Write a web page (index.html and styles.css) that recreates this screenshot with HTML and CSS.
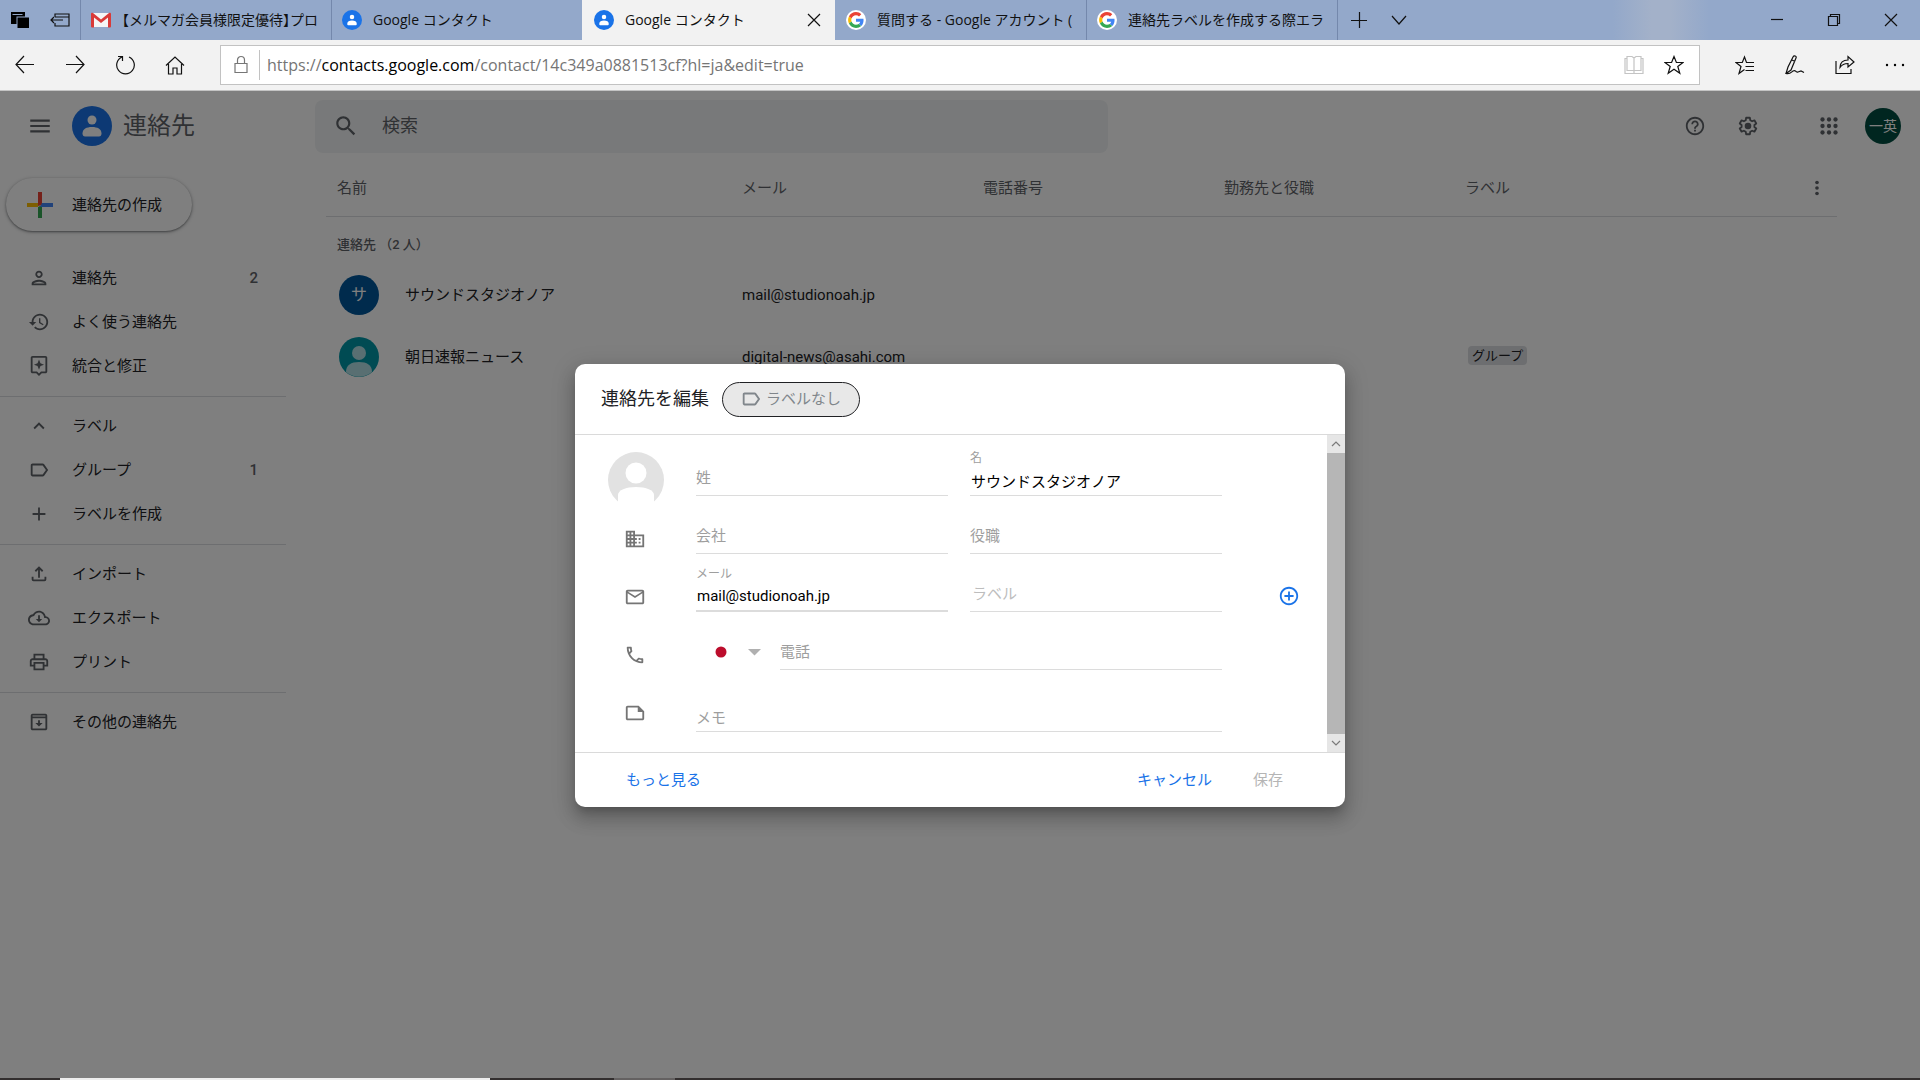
FILE: index.html
```html
<!DOCTYPE html>
<html lang="ja">
<head>
<meta charset="utf-8">
<title>Google コンタクト</title>
<link rel="stylesheet" href="styles.css">
</head>
<body>
<svg class="symbols" aria-hidden="true">
  <symbol id="contact-logo" viewBox="0 0 40 40"><circle cx="20" cy="20" r="20" fill="#1a73e8"/><circle cx="20" cy="14" r="4.500" fill="#fff"/><path d="M10.500 27.500c0-4.500 4-6.500 9.500-6.500s9.500 2 9.500 6.500c0 2-1 3-2.500 3H13c-1.500 0-2.500-1-2.500-3z" fill="#fff"/></symbol>
  <symbol id="google-logo" viewBox="0 0 48 48"><circle cx="24" cy="24" r="24" fill="#fff"/><g transform="translate(5 5) scale(.79)"><path fill="#EA4335" d="M24 9.500c3.540 0 6.710 1.220 9.210 3.600l6.850-6.850C35.900 2.380 30.470 0 24 0 14.620 0 6.510 5.380 2.560 13.220l7.980 6.190C12.430 13.720 17.740 9.500 24 9.500z"/><path fill="#4285F4" d="M46.980 24.550c0-1.570-.15-3.090-.38-4.550H24v9.020h12.940c-.58 2.960-2.260 5.480-4.780 7.180l7.730 6c4.510-4.180 7.090-10.360 7.090-17.650z"/><path fill="#FBBC05" d="M10.530 28.590c-.48-1.450-.76-2.990-.76-4.590s.27-3.140.76-4.590l-7.980-6.190C.92 16.460 0 20.120 0 24c0 3.880.92 7.540 2.560 10.780l7.970-6.190z"/><path fill="#34A853" d="M24 48c6.480 0 11.930-2.130 15.890-5.810l-7.730-6c-2.150 1.450-4.920 2.300-8.160 2.300-6.260 0-11.570-4.220-13.470-9.910l-7.980 6.190C6.510 42.620 14.620 48 24 48z"/></g></symbol>
  <symbol id="label" viewBox="0 0 24 24"><path d="M17.630 5.840C17.270 5.330 16.670 5 16 5L5 5.010C3.900 5.010 3 5.900 3 7v10c0 1.100.9 1.990 2 1.990L16 19c.67 0 1.270-.33 1.630-.84L22 12l-4.370-6.160zM16 17H5V7h11l3.550 5L16 17z"/></symbol>
</svg>

<header class="tabs">
  <div class="tab-tools">
    <svg class="i20 fill" viewBox="0 0 20 20"><path d="M1 2h14v4.500H6.500V14H1z"/><path d="M7.500 7.500H19V18H7.500z"/><path d="M2.500 4.500h10" stroke="#93a7c8" fill="none"/></svg>
    <svg class="i20 line" viewBox="0 0 20 20"><path d="M5 7V4h14v12H5v-3M5 7h14M1 10h12M4 7l-3 3 3 3"/></svg>
  </div>
  <div class="tab"><svg class="i20" viewBox="0 0 20 20"><path fill="#f5f5f5" d="M1 3h18v14H1z"/><path fill="#d93a38" d="M0 4c0-1 1-1.500 2-1l8 6.500L18 3c1-.5 2 0 2 1v12c0 1-.5 1.500-1.500 1.500H17V7.500l-7 5.500-7-5.500v10H1.500C.5 17.500 0 17 0 16z"/></svg><span>【メルマガ会員様限定優待】プロ</span></div>
  <div class="tab"><svg class="i20"><use href="#contact-logo"/></svg><span>Google コンタクト</span></div>
  <div class="tab active"><svg class="i20"><use href="#contact-logo"/></svg><span>Google コンタクト</span><button class="close" aria-label="タブを閉じる"><svg class="i20 line" viewBox="0 0 20 20"><path d="M4 4l12 12M16 4L4 16"/></svg></button></div>
  <div class="tab"><svg class="i20"><use href="#google-logo"/></svg><span>質問する - Google アカウント (</span></div>
  <div class="tab"><svg class="i20"><use href="#google-logo"/></svg><span>連絡先ラベルを作成する際エラ</span></div>
  <div class="tab-actions">
    <button aria-label="新しいタブ"><svg class="i20 line" viewBox="0 0 20 20"><path d="M2 10.500h16M10.500 2v16"/></svg></button>
    <button aria-label="タブの一覧"><svg class="i20 line" viewBox="0 0 20 20"><path d="M3 6l7 8 7-8"/></svg></button>
  </div>
  <div class="window-actions">
    <button aria-label="最小化"><svg class="i20 line" viewBox="0 0 20 20"><path d="M4 9.500h12"/></svg></button>
    <button aria-label="元に戻す"><svg class="i20 line" viewBox="0 0 20 20"><path d="M4.500 6.500h9v9h-9zM6.500 6.500v-2h9v9h-2"/></svg></button>
    <button aria-label="閉じる"><svg class="i20 line" viewBox="0 0 20 20"><path d="M4 4l12 12M16 4L4 16"/></svg></button>
  </div>
</header>

<nav class="toolbar">
  <button aria-label="戻る"><svg class="i20 line" viewBox="0 0 20 20"><path d="M19 9.500H1M9 1L1 9.500 9 18"/></svg></button>
  <button aria-label="進む"><svg class="i20 line" viewBox="0 0 20 20"><path d="M1 9.500h18M11 1l8 8.500-8 8.500"/></svg></button>
  <button aria-label="更新"><svg class="i20 line" viewBox="0 0 20 20"><path d="M14 2a8.800 8.800 0 1 1-7 0M3 1.500h4.500V6"/></svg></button>
  <button aria-label="ホーム"><svg class="i20 line" viewBox="0 0 20 20"><path d="M1 10.500L10 2l9 8.500M3.500 9v10H8v-6h4v6h4.500V9"/></svg></button>
  <div class="address">
    <svg class="i20 line lock" viewBox="0 0 20 20"><path d="M4 8.500h12v9H4zM6.500 8.500V5a3.500 3.500 0 0 1 7 0v3.500"/></svg>
    <p class="url">https://<b>contacts.google.com</b>/contact/14c349a0881513cf?hl=ja&amp;edit=true</p>
    <svg class="i20 line reader" viewBox="0 0 20 20"><path d="M1 3.500h2v-2h5l2 1.500 2-1.500h5v2h2v15H1zM3 3.500v12h14v-12M10 3v15"/></svg>
    <button aria-label="お気に入りに追加"><svg class="i20 line" viewBox="0 0 20 20"><path d="M10 1.500l2.400 6H19l-5.200 4 2 6.800-5.800-4-5.800 4 2-6.800-5.200-4h6.600z"/></svg></button>
  </div>
  <div class="hub">
    <button aria-label="ハブ"><svg class="i20 line" viewBox="0 0 20 20"><path d="M19 7.500h-7.500L9.500 2 7.300 7.500H1l5 4-2 7 5.500-4M10.500 11.500H19M10.500 15.500H19"/></svg></button>
    <button aria-label="ノート"><svg class="i20 line" viewBox="0 0 20 20"><path d="M1 18.500L3 12 8 2c1-2 4-1 3 1L6 15l-5 3.500c4 1 5-1 7-2.500 3-2 2 2 5 1l3-1 3 1.500M7 5l3 1.500"/></svg></button>
    <button aria-label="共有"><svg class="i20 line" viewBox="0 0 20 20"><path d="M1 6v12.500h15V14M5 12.500c0-5 3-7.500 8-7.500V1.500L19 7l-6 5V8.500c-4 0-6 1-8 4z"/></svg></button>
    <button aria-label="設定など"><svg class="i20 fill" viewBox="0 0 20 20"><circle cx="2" cy="10" r="1.200"/><circle cx="10" cy="10" r="1.200"/><circle cx="18" cy="10" r="1.200"/></svg></button>
  </div>
</nav>

<div class="app">
  <header class="app-bar">
    <div class="brand">
      <button aria-label="メインメニュー"><svg class="i26" viewBox="0 0 24 24"><path d="M3 18h18v-2H3v2zm0-5h18v-2H3v2zm0-7v2h18V6H3z"/></svg></button>
      <svg class="i40"><use href="#contact-logo"/></svg>
      <h1>連絡先</h1>
    </div>
    <form class="search" role="search">
      <svg class="i26" viewBox="0 0 24 24"><path d="M15.500 14h-.79l-.28-.27C15.410 12.590 16 11.110 16 9.500 16 5.910 13.090 3 9.500 3S3 5.910 3 9.500 5.910 16 9.500 16c1.610 0 3.090-.59 4.230-1.570l.27.28v.79l5 4.990L20.490 19l-4.990-5zm-6 0C7.010 14 5 11.990 5 9.500S7.010 5 9.500 5 14 7.010 14 9.500 11.990 14 9.500 14z"/></svg>
      <input type="text" placeholder="検索" aria-label="検索">
    </form>
    <div class="account">
      <button aria-label="ヘルプ"><svg class="i22" viewBox="0 0 24 24"><path d="M11 18h2v-2h-2v2zm1-16C6.480 2 2 6.480 2 12s4.480 10 10 10 10-4.480 10-10S17.520 2 12 2zm0 18c-4.410 0-8-3.590-8-8s3.590-8 8-8 8 3.590 8 8-3.590 8-8 8zm0-14c-2.210 0-4 1.790-4 4h2c0-1.100.9-2 2-2s2 .9 2 2c0 2-3 1.750-3 5h2c0-2.250 3-2.500 3-5 0-2.210-1.790-4-4-4z"/></svg></button>
      <button aria-label="設定"><svg class="i22" viewBox="0 0 24 24"><path fill="none" stroke="#5f6368" stroke-width="2" stroke-linejoin="round" d="M10 3h4l.5 2.700 2 1.100L19 5.800l2 3.400-2 1.700v2.200l2 1.700-2 3.400-2.500-1-2 1.100L14 21h-4l-.5-2.700-2-1.100-2.500 1-2-3.400 2-1.700v-2.200L3 9.200l2-3.400 2.500 1 2-1.100z"/><circle cx="12" cy="12" r="3.600"/></svg></button>
      <button class="apps" aria-label="Google アプリ"><svg class="i26" viewBox="0 0 24 24"><circle cx="6" cy="6" r="2"/><circle cx="12" cy="6" r="2"/><circle cx="18" cy="6" r="2"/><circle cx="6" cy="12" r="2"/><circle cx="12" cy="12" r="2"/><circle cx="18" cy="12" r="2"/><circle cx="6" cy="18" r="2"/><circle cx="12" cy="18" r="2"/><circle cx="18" cy="18" r="2"/></svg></button>
      <button class="me">一英</button>
    </div>
  </header>

  <div class="columns">
    <aside class="side">
      <button class="create"><svg class="i32" viewBox="0 0 32 32"><path fill="#ea4335" d="M14 3h4v13l-4 1z"/><path fill="#fbbc04" d="M3 14h11v4H3z"/><path fill="#34a853" d="M14 18l4-2v13h-4z"/><path fill="#4285f4" d="M18 14h11v4H16z"/></svg>連絡先の作成</button>
      <ul>
        <li><a href="#"><svg class="i22" viewBox="0 0 24 24"><path d="M12 6c1.100 0 2 .9 2 2s-.9 2-2 2-2-.9-2-2 .9-2 2-2m0 10c2.700 0 5.800 1.290 6 2H6c.23-.72 3.310-2 6-2m0-12C9.790 4 8 5.790 8 8s1.790 4 4 4 4-1.790 4-4-1.790-4-4-4zm0 10c-2.670 0-8 1.340-8 4v2h16v-2c0-2.660-5.330-4-8-4z"/></svg>連絡先<span>2</span></a></li>
        <li><a href="#"><svg class="i22" viewBox="0 0 24 24"><path d="M13 3c-4.970 0-9 4.030-9 9H1l3.890 3.890.07.14L9 12H6c0-3.870 3.130-7 7-7s7 3.130 7 7-3.130 7-7 7c-1.930 0-3.680-.79-4.940-2.060l-1.420 1.420C8.270 19.990 10.510 21 13 21c4.970 0 9-4.030 9-9s-4.030-9-9-9zm-1 5v5l4.280 2.540.72-1.210-3.500-2.080V8H12z"/></svg>よく使う連絡先</a></li>
        <li><a href="#"><svg class="i22" viewBox="0 0 24 24"><path d="M19 1H5c-1.110 0-2 .9-2 2v15c0 1.100.89 2 2 2h4l3 3 3-3h4c1.100 0 2-.9 2-2V3c0-1.100-.9-2-2-2zm0 17h-4.830L12 20.170 9.830 18H5V3h14v15zM12 16l1.600-3.900L17.500 10.500l-3.900-1.600L12 5l-1.600 3.900-3.900 1.600 3.900 1.600z"/></svg>統合と修正</a></li>
      </ul>
      <ul>
        <li><a href="#"><svg class="i22" viewBox="0 0 24 24"><path d="M12 8l-6 6 1.410 1.410L12 10.830l4.590 4.580L18 14z"/></svg>ラベル</a></li>
        <li><a href="#"><svg class="i22"><use href="#label"/></svg>グループ<span>1</span></a></li>
        <li><a href="#"><svg class="i22" viewBox="0 0 24 24"><path d="M19 13h-6v6h-2v-6H5v-2h6V5h2v6h6v2z"/></svg>ラベルを作成</a></li>
      </ul>
      <ul>
        <li><a href="#"><svg class="i22 stroke" viewBox="0 0 24 24"><path d="M5 15v3c0 .6.400 1 1 1h12c.6 0 1-.4 1-1v-3M12 16V5M8 9l4-4 4 4"/></svg>インポート</a></li>
        <li><a href="#"><svg class="i22" viewBox="0 0 24 24"><path d="M19.350 10.040C18.670 6.590 15.640 4 12 4 9.110 4 6.600 5.640 5.350 8.040 2.340 8.360 0 10.910 0 14c0 3.310 2.690 6 6 6h13c2.760 0 5-2.240 5-5 0-2.640-2.050-4.780-4.650-4.960zM19 18H6c-2.210 0-4-1.790-4-4 0-2.050 1.530-3.760 3.560-3.970l1.070-.11.5-.95C8.080 7.140 9.940 6 12 6c2.620 0 4.880 1.860 5.390 4.430l.3 1.500 1.530.11c1.560.1 2.780 1.410 2.780 2.960 0 1.650-1.350 3-3 3zM13 9h-2v4H8.500l3.500 3.500 3.500-3.500H13z"/></svg>エクスポート</a></li>
        <li><a href="#"><svg class="i22" viewBox="0 0 24 24"><path d="M19 8h-1V3H6v5H5c-1.660 0-3 1.340-3 3v6h4v4h12v-4h4v-6c0-1.660-1.340-3-3-3zM8 5h8v3H8V5zm8 14H8v-5h8v5zm2-4v-3H6v3H4v-4c0-.55.45-1 1-1h14c.55 0 1 .45 1 1v4h-2z"/></svg>プリント</a></li>
      </ul>
      <ul>
        <li><a href="#"><svg class="i22" viewBox="0 0 24 24"><path d="M19 3H5C4 3 3 4 3 5v14c0 1.100.9 2 2 2h14c1.100 0 2-.9 2-2V5c0-1-1-2-2-2zm0 16H5V8h14v11zm0-13H5V5h14v1zM13 10h-2v3H8l4 4 4-4h-3z"/></svg>その他の連絡先</a></li>
      </ul>
    </aside>

    <main>
      <table>
        <colgroup><col class="c-name"><col class="c-mid"><col class="c-mid"><col class="c-mid"><col><col class="c-more"></colgroup>
        <thead>
          <tr><th>名前</th><th>メール</th><th>電話番号</th><th>勤務先と役職</th><th>ラベル</th><th><button aria-label="その他の操作"><svg class="i22" viewBox="0 0 24 24"><circle cx="12" cy="6" r="2"/><circle cx="12" cy="12" r="2"/><circle cx="12" cy="18" r="2"/></svg></button></th></tr>
        </thead>
        <tbody>
          <tr class="group"><td colspan="6">連絡先 （2 人）</td></tr>
          <tr><td><div class="person"><span class="initial">サ</span>サウンドスタジオノア</div></td><td>mail@studionoah.jp</td><td></td><td></td><td></td><td></td></tr>
          <tr><td><div class="person"><svg class="i40 face" viewBox="0 0 40 40"><circle cx="20" cy="20" r="20" fill="#0097a7"/><circle cx="20" cy="16" r="7" fill="#b2dfe4"/><path d="M7 35c0-7 5-10 13-10s13 3 13 10a20 20 0 0 1-26 0z" fill="#b2dfe4"/></svg>朝日速報ニュース</div></td><td>digital-news@asahi.com</td><td></td><td></td><td><span class="tag">グループ</span></td><td></td></tr>
        </tbody>
      </table>
    </main>
  </div>

  <div class="scrim">
    <form class="dialog" role="dialog" aria-labelledby="dialog-title">
      <header class="dialog-head">
        <h2 id="dialog-title">連絡先を編集</h2>
        <button type="button" class="chip"><svg class="i22"><use href="#label"/></svg>ラベルなし</button>
      </header>
      <div class="dialog-body">
        <div class="fields">
          <div class="row">
            <svg class="photo" viewBox="0 0 56 50"><circle cx="28" cy="28" r="28" fill="#e2e2e2"/><circle cx="28" cy="21" r="10.500" fill="#fff"/><path d="M10 56V43c0-5 8-8 18-8s18 3 18 8v13z" fill="#fff"/></svg>
            <div class="field"><input type="text" placeholder="姓" aria-label="姓"></div>
            <div class="field filled"><label for="given">名</label><input id="given" type="text" value="サウンドスタジオノア"></div>
          </div>
          <div class="row">
            <svg class="i22" viewBox="0 0 24 24"><path d="M12 7V3H2v18h20V7H12zM6 19H4v-2h2v2zm0-4H4v-2h2v2zm0-4H4V9h2v2zm0-4H4V5h2v2zm4 12H8v-2h2v2zm0-4H8v-2h2v2zm0-4H8V9h2v2zm0-4H8V5h2v2zm10 12h-8v-2h2v-2h-2v-2h2v-2h-2V9h8v10zm-2-8h-2v2h2v-2zm0 4h-2v2h2v-2z"/></svg>
            <div class="field"><input type="text" placeholder="会社" aria-label="会社"></div>
            <div class="field"><input type="text" placeholder="役職" aria-label="役職"></div>
          </div>
          <div class="row">
            <svg class="i22" viewBox="0 0 24 24"><path d="M22 6c0-1.100-.9-2-2-2H4c-1.100 0-2 .9-2 2v12c0 1.100.9 2 2 2h16c1.100 0 2-.9 2-2V6zm-2 0l-8 5-8-5h16zm0 12H4V8l8 5 8-5v10z"/></svg>
            <div class="field filled hover"><label for="mail">メール</label><input id="mail" type="email" value="mail@studionoah.jp"></div>
            <div class="field pale"><input type="text" placeholder="ラベル" aria-label="メールのラベル"></div>
            <button type="button" class="add" aria-label="メールを追加"><svg class="i22" viewBox="0 0 24 24"><path d="M13 7h-2v4H7v2h4v4h2v-4h4v-2h-4V7zm-1-5C6.480 2 2 6.480 2 12s4.480 10 10 10 10-4.480 10-10S17.520 2 12 2zm0 18c-4.410 0-8-3.590-8-8s3.590-8 8-8 8 3.590 8 8-3.590 8-8 8z"/></svg></button>
          </div>
          <div class="row">
            <svg class="i22" viewBox="0 0 24 24"><path d="M6.540 5c.06.89.21 1.760.45 2.590l-1.200 1.200c-.41-1.200-.67-2.470-.76-3.790h1.510m9.860 12.020c.85.24 1.720.39 2.600.45v1.490c-1.320-.09-2.590-.35-3.800-.75l1.200-1.190M7.500 3H4c-.55 0-1 .45-1 1 0 9.390 7.610 17 17 17 .55 0 1-.45 1-1v-3.490c0-.55-.45-1-1-1-1.240 0-2.450-.2-3.570-.57-.1-.04-.21-.05-.31-.05-.26 0-.51.1-.71.29l-2.200 2.200c-2.830-1.450-5.150-3.760-6.590-6.590l2.200-2.200c.28-.28.36-.67.25-1.020C8.700 6.450 8.500 5.250 8.500 4c0-.55-.45-1-1-1z"/></svg>
            <div class="phone">
              <button type="button" class="country" aria-label="国コード"><svg viewBox="0 0 50 12"><circle cx="8" cy="6" r="5.500" fill="#bc0d2c"/><path d="M35 3h13l-6.500 6.500z" fill="#b0b0b0"/></svg></button>
              <div class="field"><input type="tel" placeholder="電話" aria-label="電話"></div>
            </div>
          </div>
          <div class="row last">
            <svg class="i22" viewBox="0 0 24 24"><path d="M16 4H4c-1.100 0-2 .9-2 2v12c0 1.100.9 2 2 2h16c1.100 0 2-.9 2-2v-8l-6-6zM4 18V6h11v5h5v7H4z"/></svg>
            <div class="field memo"><textarea rows="1" placeholder="メモ" aria-label="メモ"></textarea></div>
          </div>
        </div>
        <div class="scroll" aria-hidden="true">
          <svg class="i18 line" viewBox="0 0 18 18"><path d="M5 11l4-4 4 4"/></svg>
          <div class="thumb"></div>
          <svg class="i18 line" viewBox="0 0 18 18"><path d="M5 7l4 4 4-4"/></svg>
        </div>
      </div>
      <footer class="dialog-foot">
        <button type="button">もっと見る</button>
        <button type="button" class="cancel">キャンセル</button>
        <button type="submit" disabled>保存</button>
      </footer>
    </form>
  </div>
</div>
<footer class="taskbar"><div class="window-edge"></div><div class="task"></div></footer>
</body>
</html>
```
FILE: styles.css
```css
* { box-sizing: border-box; }

body {
  margin: 0;
  min-height: 100vh;
  display: flex;
  flex-direction: column;
  font: 15px/20px Roboto, "Noto Sans CJK JP", sans-serif;
  color: #202124;
}

button {
  display: flex;
  align-items: center;
  justify-content: center;
  flex: none;
  padding: 0;
  border: 0;
  background: none;
  font: inherit;
  color: inherit;
}

input, textarea { font: inherit; }
h1, h2, p, ul { margin: 0; }
ul { padding: 0; list-style: none; }
svg { flex: none; display: block; fill: #5f6368; }

.symbols { position: absolute; width: 0; height: 0; }
.i18 { width: 18px; height: 18px; }
.i20 { width: 20px; height: 20px; }
.i22 { width: 22px; height: 22px; }
.i26 { width: 26px; height: 26px; }
.i32 { width: 32px; height: 32px; }
.i40 { width: 40px; height: 40px; }
.fill { fill: #000; }
.line { fill: none; stroke: #111; stroke-width: 1.2; }
.stroke { fill: none; stroke: #5f6368; stroke-width: 2; }

/* browser tabs */
.tabs {
  display: flex;
  height: 40px;
  background: linear-gradient(90deg, #93a8ca 84%, #a3b1c9 86%, #a3b1c9 87%, #93a8ca 89%);
  font: 14px/20px "Open Sans", "Noto Sans CJK JP", sans-serif;
  color: #111;
}
.tab-tools { display: flex; align-items: center; gap: 20px; width: 80px; padding-left: 10px; }
.tab {
  display: flex;
  align-items: center;
  gap: 11px;
  flex: 0 1 251px;
  min-width: 0;
  padding: 0 10px;
  border-left: 1px solid #7488ac;
}
.tab span {
  flex: 1;
  overflow: hidden;
  white-space: nowrap;
  font-feature-settings: "halt";
}
.tab.active { background: #f2f2f2; border-color: #f2f2f2; flex-basis: 253px; padding-left: 11px; }
.tab.active + .tab { border-color: transparent; }
.close { margin-right: 1px; }
.tab-actions { display: flex; gap: 20px; padding-left: 11px; border-left: 1px solid #7488ac; }
.window-actions { display: flex; gap: 37px; margin-left: auto; padding-right: 19px; }

/* browser toolbar */
.toolbar {
  display: flex;
  align-items: center;
  height: 51px;
  padding: 0 15px;
  gap: 30px;
  background: #f2f2f2;
  border-bottom: 1px solid #c4c4c4;
}
.address {
  display: flex;
  align-items: center;
  flex: 1;
  height: 40px;
  margin-left: 5px;
  padding: 0 15px 0 10px;
  background: #fff;
  border: 1px solid #c2c2c2;
}
.lock { stroke: #767676; }
.reader { stroke: #c4c4c4; margin-right: 20px; }
.url {
  flex: 1;
  margin-left: 8px;
  padding-left: 7px;
  border-left: 1px solid #c2c2c2;
  font: 16px/30px "Open Sans", sans-serif;
  color: #757575;
}
.url b { font-weight: 400; color: #000; }
.hub { display: flex; gap: 30px; margin-left: 5px; }

/* contacts page */
.app { position: relative; flex: 1; background: #fff; }
.app-bar { display: flex; align-items: center; height: 70px; padding-right: 19px; }
.brand { display: flex; align-items: center; width: 315px; padding-left: 27px; gap: 19px; }
.brand h1 { margin-left: -8px; font-size: 24px; line-height: 32px; font-weight: 400; color: #5f6368; }
.search {
  display: flex;
  align-items: center;
  flex: 0 1 793px;
  height: 53px;
  padding: 0 18px;
  gap: 21px;
  border-radius: 8px;
  background: #f1f3f4;
}
.search input { flex: 1; border: 0; background: none; font-size: 18px; }
.search input::placeholder { color: #5f6368; opacity: 1; }
.account { display: flex; align-items: center; gap: 31px; margin-left: auto; }
.apps { margin-left: 26px; }
.me {
  width: 36px;
  height: 36px;
  margin-left: -8px;
  border-radius: 50%;
  background: #004d40;
  color: #fff;
  font-size: 14px;
}
.columns { display: flex; }
.side { width: 286px; flex: none; padding-top: 17px; }
.create {
  height: 53px;
  margin: 0 0 25px 6px;
  padding: 0 30px 0 18px;
  gap: 16px;
  border-radius: 27px;
  background: #fff;
  box-shadow: 0 1px 2px rgba(60, 64, 67, .5), 0 1px 4px rgba(60, 64, 67, .3);
}
.side ul + ul { margin-top: 8px; padding-top: 7px; border-top: 1px solid #dadce0; }
.side a {
  display: flex;
  align-items: center;
  gap: 22px;
  height: 44px;
  padding: 0 28px;
  color: inherit;
  text-decoration: none;
}
.side a span { margin-left: auto; color: #5f6368; font-weight: 500; }

main { flex: 1; padding: 0 83px 0 40px; }
table { width: 100%; table-layout: fixed; border-collapse: collapse; text-align: left; }
.c-name { width: 405px; }
.c-mid { width: 241px; }
.c-more { width: 31px; }
th, td { padding: 0 0 0 11px; }
th { height: 55px; border-bottom: 1px solid #dadce0; font-weight: 400; color: #5f6368; }
th:last-child { padding: 0; }
td { height: 62px; }
.group td { height: 48px; padding-bottom: 9px; vertical-align: bottom; font-size: 13px; font-weight: 500; color: #5f6368; }
.person { display: flex; align-items: center; gap: 26px; padding-left: 2px; }
.initial {
  display: flex;
  align-items: center;
  justify-content: center;
  width: 40px;
  height: 40px;
  border-radius: 50%;
  background: #01579b;
  color: #fff;
  font-size: 16px;
}
.tag {
  display: inline-block;
  margin: 0 0 5px 3px;
  padding: 0 4px;
  border-radius: 4px;
  background: #dadce0;
  font-size: 13px;
  line-height: 19px;
}

/* contact editor */
.scrim {
  position: absolute;
  inset: 0;
  display: flex;
  align-items: center;
  justify-content: center;
  padding-top: 2px;
  background: rgba(0, 0, 0, .5);
}
.dialog {
  width: 770px;
  border-radius: 10px;
  background: #fff;
  overflow: hidden;
  box-shadow: 0 12px 17px 2px rgba(0, 0, 0, .14), 0 5px 22px 4px rgba(0, 0, 0, .12), 0 7px 8px -4px rgba(0, 0, 0, .2);
}
.dialog-head { display: flex; align-items: center; gap: 13px; height: 71px; padding-left: 26px; border-bottom: 1px solid #dadada; }
.dialog-head h2 { font-size: 18px; line-height: 24px; font-weight: 400; }
.chip {
  height: 35px;
  padding: 0 18px 0 17px;
  gap: 4px;
  border: 1px solid #202124;
  border-radius: 18px;
  background: #e8e8e8;
  color: #80868b;
}
.chip svg { fill: #80868b; }
.dialog-body { display: flex; border-bottom: 1px solid #dadada; }
.fields { flex: 1; padding: 3px 0 20px 33px; }
.row {
  display: grid;
  grid-template-columns: 66px 252px 252px 56px;
  column-gap: 22px;
  align-items: end;
  height: 58px;
}
.row > .i22 { margin: 0 0 4px 16px; fill: #757575; }
.row.last { height: 62px; }
.row.last > .i22 { margin-bottom: 8px; }
.photo { width: 56px; height: 50px; margin-bottom: -6px; }
.field { display: flex; flex-direction: column; min-width: 0; }
.field label { color: #9e9e9e; font-size: 12px; line-height: 16px; }
.field input, .field textarea {
  width: 100%;
  height: 36px;
  padding: 0;
  border: 0;
  border-bottom: 1px solid #dcdcdc;
  border-radius: 0;
  background: none;
  resize: none;
  color: #000;
}
.field input::placeholder, .field textarea::placeholder { color: #9e9e9e; opacity: 1; }
.field.filled input { height: 30px; padding-left: 1px; }
.field.hover input { border-bottom-width: 2px; }
.field.pale input { padding-left: 2px; }
.field.pale input::placeholder { color: #bdbdbd; }
.phone { grid-column: 2 / 4; display: grid; grid-template-columns: 84px 1fr; }
.country { align-self: center; }
.country svg { width: 50px; height: 12px; }
.memo { grid-column: 2 / 4; }
.field textarea { height: 26px; line-height: 24px; overflow: hidden; }
.add { justify-self: end; margin-bottom: 5px; }
.add svg { fill: #1a73e8; }
.scroll { display: flex; flex-direction: column; width: 18px; background: #e6e6e6; }
.scroll svg { stroke: #7a7a7a; }
.thumb { flex: 1; background: #b6b6b6; }
.dialog-foot { display: flex; align-items: center; height: 54px; padding: 0 62px 0 51px; color: #1a73e8; }
.cancel { margin-left: auto; margin-right: 41px; }
.dialog-foot :disabled { color: #b5b5b5; }

.taskbar { display: flex; height: 2px; padding-left: 60px; background: #332f2f; }
.window-edge { width: 430px; background: #eee; }
.task { width: 61px; margin-left: 124px; background: #646161; }
```
